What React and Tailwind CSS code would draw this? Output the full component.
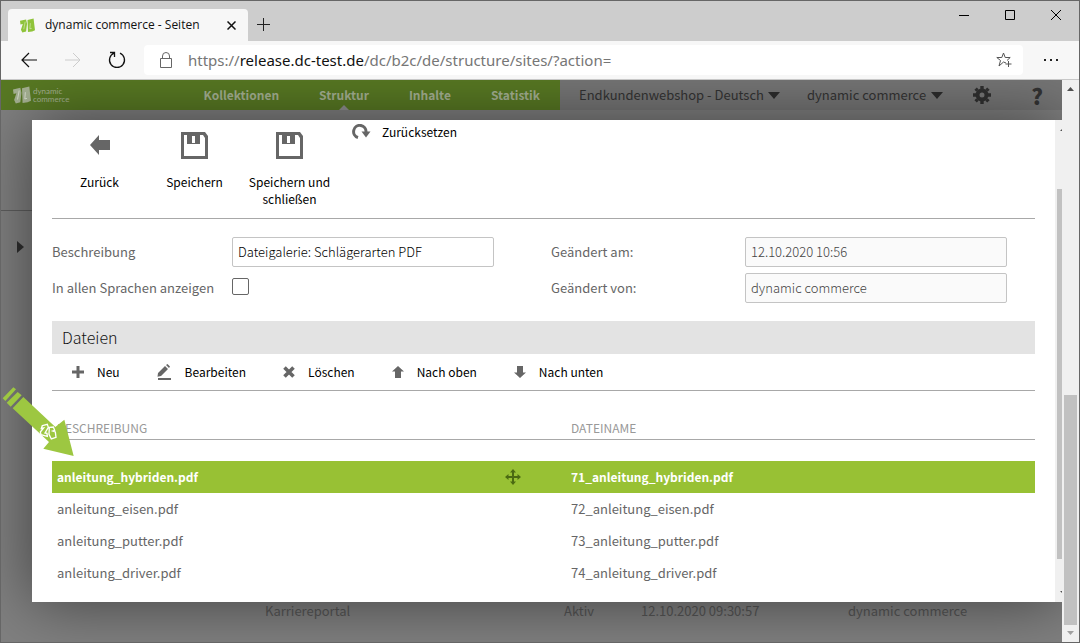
import { useState } from "react";

const files = [
  { id: 71, name: "anleitung_hybriden.pdf" },
  { id: 72, name: "anleitung_eisen.pdf" },
  { id: 73, name: "anleitung_putter.pdf" },
  { id: 74, name: "anleitung_driver.pdf" },
];

const navItems = ["Kollektionen", "Struktur", "Inhalte", "Statistik"];

const inputClass = "h-[30px] w-[262px] rounded-[2px] border border-[#c4c4c4] px-[5px] pb-[2px] text-[13px] font-light";

/* Icons */

function Logo({ className }) {
  return (
    <svg viewBox="0 0 32 32" className={className} fill="currentColor" aria-hidden="true">
      <path d="M0 6l13-3 2 9-2 17-8 2-3-6 4-12-5 1z" />
      <path d="M16 4l13-3 1 9 2 16-6 3-9 1z" />
      <path d="M11 8L8 24M22 11l-1 12 4-1" stroke="#fff" strokeOpacity=".6" strokeWidth="1.500" fill="none" />
    </svg>
  );
}

function FloppyIcon() {
  return (
    <svg viewBox="0 0 27 27" className="h-[27px] w-[27px]" aria-hidden="true">
      <path fillRule="evenodd" fill="#666" d="M0 0h24l3 4v23H0zM3 3v21h21V6l-2-3h-3v9H6V3zm8 1v7h3V4z" />
    </svg>
  );
}

function ArrowIcon({ className }) {
  return (
    <svg viewBox="0 0 20 20" className={className} fill="#666" aria-hidden="true">
      <path d="M0 10L9 0v5h11v10H9v5z" />
    </svg>
  );
}

function ResetIcon() {
  return (
    <svg viewBox="0 0 19 16" className="h-4 w-[19px]" aria-hidden="true">
      <path d="M6 13.500A6.200 6.200 0 1 1 14 8" fill="none" stroke="#666" strokeWidth="3" />
      <path d="M9.500 7.500h9L14 13.500z" fill="#666" />
    </svg>
  );
}

function PlusIcon() {
  return (
    <svg viewBox="0 0 12 12" className="h-3 w-3" aria-hidden="true">
      <path d="M6 0v12M0 6h12" stroke="#666" strokeWidth="3" />
    </svg>
  );
}

function PencilIcon() {
  return (
    <svg viewBox="0 0 15 16" className="h-4 w-[15px]" fill="#666" aria-hidden="true">
      <path d="M1 9l7-7 3 3-7 7-3.500.700zM9 1l1.500-1 2.500 2.500L12 4z" />
      <path d="M1 14h13v2H1z" />
    </svg>
  );
}

function CrossIcon() {
  return (
    <svg viewBox="0 0 12 12" className="h-3 w-3" aria-hidden="true">
      <path d="M1.500 1.500l9 9M10.500 1.500l-9 9" stroke="#666" strokeWidth="3.600" />
    </svg>
  );
}

function MoveIcon() {
  return (
    <svg viewBox="0 0 16 16" className="h-4 w-4" fill="#4b6a12" aria-hidden="true">
      <path d="M8 0l3 3.500H9V7h3.500V5L16 8l-3.500 3V9H9v3.500h2L8 16l-3-3.500h2V9H3.500v2L0 8l3.500-3v2H7V3.500H5z" />
    </svg>
  );
}

function GearIcon() {
  return (
    <svg viewBox="0 0 18 18" className="h-[18px] w-[18px]" aria-hidden="true">
      <circle cx="9" cy="9" r="4.500" fill="none" stroke="#303030" strokeWidth="4" />
      <path
        d="M9 0v3M9 15v3M0 9h3M15 9h3M2.600 2.600l2 2M13.400 13.400l2 2M2.600 15.400l2-2M13.400 4.600l2-2"
        stroke="#303030"
        strokeWidth="3.400"
      />
    </svg>
  );
}

function Caret() {
  return (
    <svg viewBox="0 0 12 7" className="h-[7px] w-3" fill="#2c2c2c" aria-hidden="true">
      <path d="M0 0h12L6 7z" />
    </svg>
  );
}

function Pointer() {
  return (
    <svg viewBox="3 0 225 234" className="pointer-events-none absolute top-[300px] left-0 h-[78px] w-[75px]" aria-hidden="true">
      <path
        d="M8 55L40 22l8 6-32 35zM20 68L53 36l12 10-33 34zM38 85L70 51l96 90 27-22 28 109-91-22 17-20z"
        fill="#9dc741"
      />
      <path
        d="M127 137l15-4 3 9-10 17 6 1 1 9-19-5-2-8 10-12-7 1zM148 142l12-1 4 10-6 2 8 3 2 16-14 5-7-14z"
        fill="none"
        stroke="#fff"
        strokeWidth="4"
      />
    </svg>
  );
}

/* Browser window */

function TitleBar() {
  return (
    <div className="flex h-10 shrink-0 items-stretch bg-[#cdcdcd] pl-[7px]">
      <div className="mt-2 flex w-60 items-center rounded-t-[4px] bg-[#f7f7f7] pr-3 pl-3">
        <Logo className="h-[15px] w-[15px] text-[#8fc33a]" />
        <span className="ml-[10px] grow text-[12px] text-[#111]">dynamic commerce - Seiten</span>
        <button aria-label="Tab schließen">
          <svg viewBox="0 0 9 9" className="h-[9px] w-[9px]" stroke="#111" strokeWidth="1.500">
            <path d="M.5.5l8 8M8.500.5l-8 8" />
          </svg>
        </button>
      </div>
      <button className="mt-[6px] ml-[9px]" aria-label="Neuer Tab">
        <svg viewBox="0 0 13 13" className="h-[13px] w-[13px]" stroke="#222">
          <path d="M6.500 0v13M0 6.500h13" />
        </svg>
      </button>
      <div className="mr-[18px] ml-auto flex h-7 items-center gap-9">
        <button aria-label="Minimieren">
          <svg viewBox="0 0 10 10" className="h-[10px] w-[10px]" stroke="#000">
            <path d="M0 5.500h10" />
          </svg>
        </button>
        <button aria-label="Maximieren">
          <svg viewBox="0 0 10 10" className="h-[10px] w-[10px]" stroke="#000" fill="none">
            <path d="M.5.5h9v9h-9z" />
          </svg>
        </button>
        <button aria-label="Schließen">
          <svg viewBox="0 0 10 10" className="h-[10px] w-[10px]" stroke="#000">
            <path d="M0 0l10 10M10 0L0 10" />
          </svg>
        </button>
      </div>
    </div>
  );
}

function AddressBar() {
  return (
    <div className="flex h-[39px] shrink-0 items-center border-b border-[#c8c8c8] bg-[#f7f7f7] pl-5">
      <button aria-label="Zurück">
        <svg viewBox="0 0 16 16" className="h-4 w-4" stroke="#111" strokeWidth="1.200" fill="none">
          <path d="M16 8H1M8 1L1 8l7 7" />
        </svg>
      </button>
      <button className="ml-7" aria-label="Vorwärts">
        <svg viewBox="0 0 16 16" className="h-4 w-4" stroke="#ccc" fill="none">
          <path d="M0 8h15M8 1l7 7-7 7" />
        </svg>
      </button>
      <button className="ml-[27px]" aria-label="Aktualisieren">
        <svg viewBox="0 0 18 18" className="h-[18px] w-[18px]" stroke="#111" strokeWidth="1.300" fill="none">
          <path d="M12 2.100A7.500 7.500 0 1 1 6 2.100M6.500 6V1.500H2" />
        </svg>
      </button>
      <div className="ml-[18px] flex h-[30px] grow items-center rounded-[4px] bg-white pr-[11px] pl-4">
        <svg viewBox="0 0 12 16" className="h-4 w-3" stroke="#666" fill="none" aria-hidden="true">
          <path d="M.5 6.500h11v9H.5zM2.500 6.500V4a3.500 3.500 0 0 1 7 0v2.500" />
        </svg>
        <div
          role="textbox"
          aria-label="Adresse"
          className="ml-4 grow font-['Noto_Sans',sans-serif] text-[15px] whitespace-nowrap text-[#767676]"
        >
          https://<span className="text-[#111]">release.dc-test.de</span>/dc/b2c/de/structure/sites/?action=
        </div>
        <button aria-label="Favorit hinzufügen">
          <svg viewBox="0 0 16 16" className="h-4 w-4" stroke="#555" fill="none">
            <path d="M10 11L7.500 10 3 14l1.500-5.500L.8 5.500h5L7.500 1l1.700 4.500h5L11 8.500M12.500 9v6M9.500 12h6" />
          </svg>
        </button>
      </div>
      <button className="mr-[21px] ml-[21px]" aria-label="Einstellungen">
        <svg viewBox="0 0 14 2" className="h-[2px] w-[14px]" fill="#222">
          <path d="M0 0h2v2H0zM6 0h2v2H6zM12 0h2v2h-2z" />
        </svg>
      </button>
    </div>
  );
}

function PageScrollbar() {
  return (
    <div className="flex w-[17px] shrink-0 flex-col items-center bg-[#f0f0f0]" aria-hidden="true">
      <svg viewBox="0 0 17 17" className="h-[17px] w-[17px] shrink-0" fill="#505050">
        <path d="M5 11l3.500-4 3.500 4z" />
      </svg>
      <div className="grow-[298]" />
      <div className="w-[13px] grow-[230] bg-[#c1c1c1]" />
      <svg viewBox="0 0 17 17" className="h-[17px] w-[17px] shrink-0" fill="#a0a0a0">
        <path d="M5 6l3.500 4L12 6z" />
      </svg>
    </div>
  );
}

/* Shop administration */

function Header() {
  return (
    <header className="flex h-[30px] shrink-0 text-[13px]">
      <div className="flex w-[559px] items-center bg-[#587923] pr-5 pl-3 text-[#a5b192]">
        <Logo className="h-[18px] w-[18px]" />
        <span className="ml-[2px] flex flex-col font-['Lato',sans-serif] text-[8px] leading-[8px]">
          <span>dynamic</span>
          <span>commerce</span>
        </span>
        <nav className="ml-auto flex h-full gap-10 text-[12px] font-bold">
          {navItems.map((item) => (
            <a key={item} href="#" className="relative leading-[30px]">
              {item}
              {item === "Struktur" && (
                <svg viewBox="0 0 10 5" className="absolute bottom-0 left-1/2 -ml-[5px] h-[5px] w-[10px]" fill="#909090">
                  <path d="M5 0l5 5H0z" />
                </svg>
              )}
            </a>
          ))}
        </nav>
      </div>
      <div className="flex grow items-center bg-[#767676] pr-[19px] pl-[19px] text-[#333]">
        <label className="flex items-center gap-1">
          <select aria-label="Shop" className="appearance-none">
            <option>Endkundenwebshop - Deutsch</option>
          </select>
          <Caret />
        </label>
        <label className="ml-[27px] flex items-center gap-1">
          <select aria-label="Benutzer" className="appearance-none">
            <option>dynamic commerce</option>
          </select>
          <Caret />
        </label>
        <button className="ml-[30px]" aria-label="Einstellungen">
          <GearIcon />
        </button>
        <button className="ml-auto text-[22px] leading-[30px] font-black" aria-label="Hilfe">
          ?
        </button>
      </div>
    </header>
  );
}

function Backdrop() {
  return (
    <div className="flex grow flex-col bg-[#808080]">
      <div className="h-[101px] border-b border-[#5e5e5e]" />
      <svg viewBox="0 0 7 12" className="mt-[30px] ml-4 h-3 w-[7px]" fill="#2e2e2e" aria-hidden="true">
        <path d="M0 0l7 6-7 6z" />
      </svg>
      <div className="mt-auto mb-[21px] flex pl-[264px] text-[13px] leading-5 text-[#555]">
        <span className="w-[299px]">Karriereportal</span>
        <span className="w-[77px]">Aktiv</span>
        <span className="w-[207px]">12.10.2020 09:30:57</span>
        <span>dynamic commerce</span>
      </div>
    </div>
  );
}

function BigButton({ icon, children }) {
  return (
    <button className="flex w-[95px] flex-col items-center text-[12px] leading-[17px]">
      <span className="flex h-7 items-center">{icon}</span>
      <span className="mt-[14px]">{children}</span>
    </button>
  );
}

function ToolButton({ icon, children }) {
  return (
    <button className="flex items-center gap-[13px]">
      {icon}
      {children}
    </button>
  );
}

function Dialog() {
  const [selected, setSelected] = useState(71);
  const [allLanguages, setAllLanguages] = useState(false);
  const [description, setDescription] = useState("Dateigalerie: Schlägerarten PDF");

  return (
    <div
      role="dialog"
      aria-label="Dateigalerie"
      className="absolute top-10 right-0 bottom-10 left-[31px] flex bg-white shadow-[0_0_60px_rgba(0,0,0,0.5)]"
    >
      <div className="min-w-0 grow overflow-hidden px-5">
        <div className="flex items-start border-b border-[#a8a8a8] pt-[11px] pb-[11px] text-black">
          <BigButton icon={<ArrowIcon className="h-5 w-5" />}>Zurück</BigButton>
          <BigButton icon={<FloppyIcon />}>Speichern</BigButton>
          <BigButton icon={<FloppyIcon />}>Speichern und schließen</BigButton>
          <button className="-mt-[8px] ml-[15px] flex h-[18px] items-center gap-[11px] text-[12px]">
            <ResetIcon />
            Zurücksetzen
          </button>
        </div>

        <div className="grid grid-cols-[499px_1fr] gap-y-[6px] py-[18px] text-[13px] text-[#666]">
          <div className="flex h-[30px] items-center">
            <label htmlFor="desc" className="w-[180px]">Beschreibung</label>
            <input
              id="desc"
              value={description}
              onChange={(e) => setDescription(e.target.value)}
              className={inputClass + " bg-white text-black"}
            />
          </div>
          <div className="flex h-[30px] items-center">
            <label htmlFor="changed-at" className="w-[194px]">Geändert am:</label>
            <input id="changed-at" readOnly value="12.10.2020 10:56" className={inputClass + " bg-[#fafafa] text-[#444]"} />
          </div>
          <div className="flex h-[30px] items-center">
            <label htmlFor="all-lang" className="w-[180px]">In allen Sprachen anzeigen</label>
            <input
              id="all-lang"
              type="checkbox"
              checked={allLanguages}
              onChange={(e) => setAllLanguages(e.target.checked)}
              className="mb-1 h-[17px] w-[17px] appearance-none rounded-[2px] border border-[#666] bg-white checked:bg-[#98c134]"
            />
          </div>
          <div className="flex h-[30px] items-center">
            <label htmlFor="changed-by" className="w-[194px]">Geändert von:</label>
            <input id="changed-by" readOnly value="dynamic commerce" className={inputClass + " bg-[#fafafa] text-[#444]"} />
          </div>
        </div>

        <h2 className="h-[33px] bg-[#e3e3e3] pl-[10px] text-[16px] leading-[33px] font-light text-[#111]">Dateien</h2>
        <div className="flex h-[37px] gap-[37px] border-b border-[#a8a8a8] pl-5 text-[12px] text-black">
          <ToolButton icon={<PlusIcon />}>Neu</ToolButton>
          <ToolButton icon={<PencilIcon />}>Bearbeiten</ToolButton>
          <ToolButton icon={<CrossIcon />}>Löschen</ToolButton>
          <ToolButton icon={<ArrowIcon className="h-3 w-3 rotate-90" />}>Nach oben</ToolButton>
          <ToolButton icon={<ArrowIcon className="h-3 w-3 -rotate-90" />}>Nach unten</ToolButton>
        </div>

        <table className="mt-[26px] w-full table-fixed text-left text-[13px] text-[#666]">
          <thead>
            <tr className="h-[22px] border-b border-[#a8a8a8] text-[12px] leading-5 text-[#999]">
              <th className="w-[514px] pl-[5px] font-normal">BESCHREIBUNG</th>
              <th className="pl-[5px] font-normal">DATEINAME</th>
            </tr>
          </thead>
          <tbody className="before:block before:h-[21px] before:content-['']">
            {files.map((file) => (
              <tr
                key={file.id}
                onClick={() => setSelected(file.id)}
                className={file.id === selected ? "h-8 bg-[#98c134] text-[12px] font-bold text-white" : "h-8"}
              >
                <td className="pr-[45px] pl-[5px]">
                  <div className="flex items-center justify-between">
                    {file.name}
                    {file.id === selected && <MoveIcon />}
                  </div>
                </td>
                <td className="pl-[5px]">{file.id + "_" + file.name}</td>
              </tr>
            ))}
          </tbody>
        </table>
      </div>

      <div className="flex w-[7px] shrink-0 flex-col items-end bg-[#f0f0f0]" aria-hidden="true">
        <svg viewBox="0 0 2 17" className="h-[17px] w-[2px] shrink-0" fill="#505050">
          <path d="M2 9v2H0z" />
        </svg>
        <div className="grow-[52]" />
        <div className="w-[5px] grow-[370] bg-[#c1c1c1]" />
        <div className="grow-[26]" />
        <svg viewBox="0 0 2 17" className="h-[17px] w-[2px] shrink-0" fill="#505050">
          <path d="M0 6h2v2z" />
        </svg>
      </div>
    </div>
  );
}

function App() {
  return (
    <div className="flex h-screen flex-col border border-[#666] font-['Open_Sans','Noto_Sans',sans-serif]">
      <TitleBar />
      <AddressBar />
      <div className="flex min-h-0 grow">
        <main className="relative flex min-w-0 grow flex-col overflow-hidden font-['Noto_Sans_CJK_SC','Noto_Sans',sans-serif]">
          <Header />
          <Backdrop />
          <Dialog />
          <Pointer />
        </main>
        <PageScrollbar />
      </div>
    </div>
  );
}

export default App;
